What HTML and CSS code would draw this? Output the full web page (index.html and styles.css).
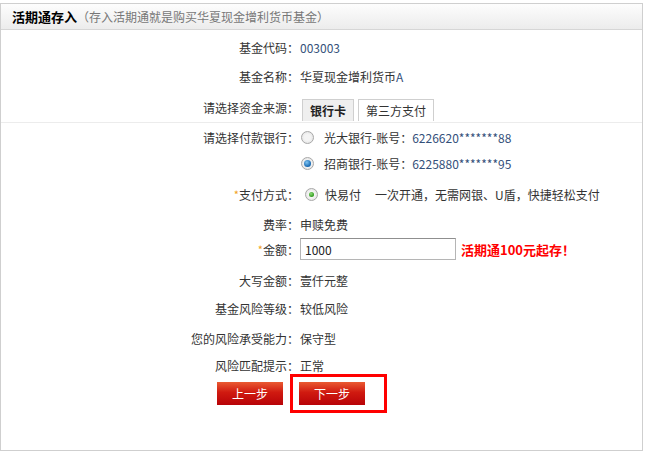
FILE: index.html
```html
<!DOCTYPE html>
<html lang="zh-CN">
<head>
    <meta charset="UTF-8">
    <title>活期通存入</title>
    <link rel="stylesheet" href="styles.css">
</head>
<body>
    <div class="panel">
        <div class="panel-head">
            <b class="panel-title">活期通存入</b><span class="panel-sub">（存入活期通就是购买华夏现金增利货币基金）</span>
        </div>

        <div class="form-grid">
            <div class="lbl">基金代码：</div>
            <div class="val num">003003</div>

            <div class="lbl">基金名称：</div>
            <div class="val">华夏现金增利货币<span class="num">A</span></div>

            <div class="lbl tab-line">请选择资金来源：</div>
            <div class="val tab-line">
                <span class="tab tab-on">银行卡</span>
                <span class="tab">第三方支付</span>
            </div>

            <div class="lbl">请选择付款银行：</div>
            <div class="val">
                <span class="radio"></span>
                <span>光大银行-账号：<span class="num">6226620*******88</span></span>
            </div>

            <div class="lbl"></div>
            <div class="val">
                <span class="radio radio-blue"></span>
                <span>招商银行-账号：<span class="num">6225880*******95</span></span>
            </div>

            <div class="lbl"><i class="star">*</i>支付方式：</div>
            <div class="val">
                <span class="radio radio-green radio-pay"></span>
                <span class="pay-name">快易付</span>
                <span>一次开通，无需网银、U盾，快捷轻松支付</span>
            </div>

            <div class="lbl">费率：</div>
            <div class="val">申赎免费</div>

            <div class="lbl"><i class="star">*</i>金额：</div>
            <div class="val">
                <input class="amount" type="text" value="1000">
                <strong class="tip">活期通100元起存！</strong>
            </div>

            <div class="lbl">大写金额：</div>
            <div class="val">壹仟元整</div>

            <div class="lbl">基金风险等级：</div>
            <div class="val">较低风险</div>

            <div class="lbl">您的风险承受能力：</div>
            <div class="val">保守型</div>

            <div class="lbl">风险匹配提示：</div>
            <div class="val">正常</div>
        </div>

        <div class="actions">
            <button class="red-btn prev-btn">上一步</button>
            <span class="mark-box"><button class="red-btn">下一步</button></span>
        </div>
    </div>
</body>
</html>
```

FILE: styles.css
```css
body {
    margin: 0;
    background: #fff;
    font-family: "Noto Sans CJK SC", "Liberation Sans", sans-serif;
    font-size: 12px;
    color: #333;
}

.panel {
    box-sizing: border-box;
    width: 643px;
    height: 448px;
    margin-top: 3px;
    border: 1px solid #cfcfcf;
}

.panel-head {
    height: 25px;
    display: flex;
    align-items: center;
    padding-left: 11px;
    background: linear-gradient(#fdfdfd, #ececec);
    border-bottom: 1px solid #d6d6d6;
}

.panel-title {
    font-size: 13px;
    color: #000;
}

.panel-sub {
    color: #777;
    font-size: 12px;
}

.form-grid {
    display: grid;
    grid-template-columns: 298px 1fr;
    grid-template-rows: 28px 30px 32px 28px 24px 38px 22px 28px 34px 22px 38px 16px;
    padding-top: 3px;
}

.lbl {
    display: flex;
    align-items: center;
    justify-content: flex-end;
    white-space: nowrap;
}

.val {
    display: flex;
    align-items: center;
    white-space: nowrap;
    padding-left: 1px;
}

.num {
    color: #34507a;
}

.star {
    font-style: normal;
    color: #f0a020;
    font-size: 11px;
}

.tab-line {
    align-items: flex-end;
    padding-bottom: 1px;
    border-bottom: 1px solid #ececec;
}

.lbl.tab-line {
    padding-bottom: 6px;
}

.tab {
    box-sizing: border-box;
    height: 22px;
    padding: 0 7px;
    display: flex;
    align-items: center;
    border: 1px solid #cfcfcf;
    border-bottom: none;
    background: #fff;
    margin-left: 2px;
    margin-right: 2px;
}

.tab-on {
    background: #efefef;
    font-weight: bold;
    color: #222;
    padding: 0 7px;
}

.radio {
    box-sizing: border-box;
    width: 13px;
    height: 13px;
    border-radius: 50%;
    border: 1px solid #a8a8a8;
    background: radial-gradient(circle, #f4f4f4 40%, #dcdcdc 100%);
    margin: 0 10px 0 1px;
    position: relative;
}

.radio-blue::after,
.radio-green::after {
    content: "";
    position: absolute;
    left: 2px;
    top: 2px;
    width: 7px;
    height: 7px;
    border-radius: 50%;
    background: radial-gradient(circle at 40% 35%, #7fc4f2, #1466b0 70%);
}

.radio-green::after {
    left: 3px;
    top: 3px;
    width: 5px;
    height: 5px;
    background: radial-gradient(circle at 40% 35%, #8fdc78, #2f9a1e 70%);
}

.radio-pay {
    margin-left: 5px;
    margin-right: 7px;
}

.pay-name {
    margin-right: 14px;
}

.amount {
    box-sizing: border-box;
    width: 156px;
    height: 22px;
    border: 1px solid #b5b5b5;
    border-top-color: #8f8f8f;
    padding: 0 4px;
    font-family: "Noto Sans CJK SC", "Liberation Sans", sans-serif;
    font-size: 12px;
    color: #222;
    margin: 0;
}

.tip {
    color: #f00;
    font-size: 13px;
    margin-left: 5px;
}

.actions {
    display: flex;
    align-items: flex-start;
    padding-left: 216px;
    margin-top: 1px;
}

.red-btn {
    width: 66px;
    height: 23px;
    border: none;
    padding: 0;
    background: linear-gradient(#ea5a32, #d01a10 45%, #b80308);
    color: #fff;
    font-family: "Noto Sans CJK SC", "Liberation Sans", sans-serif;
    font-size: 12px;
}

.prev-btn {
    margin-top: 8px;
}

.mark-box {
    display: inline-block;
    border: 3px solid #f00;
    padding: 5px 19px 5px 6px;
    margin-left: 7px;
}

.mark-box .red-btn {
    display: block;
}
```
